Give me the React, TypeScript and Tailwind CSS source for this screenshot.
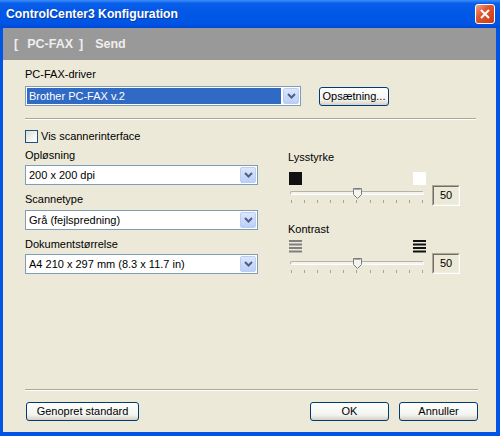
import React from "react";

const F = "font-['Liberation_Sans',Arial,sans-serif]";

function Chevron() {
  return (
    <svg width="9" height="6" viewBox="0 0 9 6">
      <polyline points="1,1 4.5,4.5 8,1" fill="none" stroke="#4D6185" strokeWidth="2" />
    </svg>
  );
}

function DropBtn() {
  return (
    <div className="m-px flex w-[16px] items-center justify-center rounded-[2px] border border-[#B9CDF7] bg-[linear-gradient(to_bottom,#DCE6FB,#BCCFF8)]">
      <Chevron />
    </div>
  );
}

function Combo({ cls, text, selected }: { cls: string; text: string; selected?: boolean }) {
  return (
    <div className={`flex h-[20px] items-stretch border border-[#7F9DB9] bg-white ${cls}`}>
      <div className="flex flex-1 p-px">
        <div className={`flex flex-1 items-center pl-[2px] text-[11px] ${selected ? "bg-[#316AC5] text-white" : "text-black"}`}>
          {text}
        </div>
      </div>
      <DropBtn />
    </div>
  );
}

function XPButton({ cls, children }: { cls: string; children: React.ReactNode }) {
  return (
    <div
      className={`flex h-[19px] items-center justify-center rounded-[3px] border border-[#003C74] bg-[linear-gradient(to_bottom,#FFFFFF,#F3F3EF_70%,#D6D0C5)] text-[11px] text-black ${cls}`}
    >
      {children}
    </div>
  );
}

function Slider() {
  const ticks = Array.from({ length: 11 });
  return (
    <div className="relative w-[136px]">
      <div className="mx-[1px] h-[4px] rounded-[2px] border border-[#B5B3AA] border-b-white border-r-white bg-[#F4F3EE]" />
      <div className="absolute left-[64px] top-[-3px]">
        <svg width="9" height="11" viewBox="0 0 9 11">
          <path d="M0.5 0.5 H8.5 V6.5 L4.5 10.5 L0.5 6.5 Z" fill="#F4F3EE" stroke="#7C7C7C" />
          <line x1="1.5" y1="1.5" x2="7.5" y2="1.5" stroke="#A7A7A7" />
        </svg>
      </div>
      <div className="mt-[5px] flex justify-between px-[2px]">
        {ticks.map((_, i) => (
          <div key={i} className="h-[3px] w-px bg-[#A7A69E]" />
        ))}
      </div>
    </div>
  );
}

function ValueBox() {
  return (
    <div className="flex h-[21px] w-[28px] items-center justify-center border border-[#ACA899] border-b-white border-r-white text-[11px] text-black">
      <div className="flex h-full w-full items-center justify-center border border-[#716F64] border-b-[#F1EFE2] border-r-[#F1EFE2]">
        50
      </div>
    </div>
  );
}

function Lines({ color }: { color: string }) {
  return (
    <svg width="13" height="13" viewBox="0 0 13 13">
      {[0, 1, 2, 3].map((i) => (
        <rect key={i} x="0" y={i * 3.5} width="13" height="2" fill={color} />
      ))}
    </svg>
  );
}

export default function App() {
  return (
    <div className={`flex h-[436px] w-[500px] flex-col bg-[#0055E5] leading-[13px] ${F}`}>
      {/* Title bar */}
      <div className="flex h-[28px] items-center justify-between bg-[linear-gradient(to_bottom,#3C8EF9_0%,#0A5EEA_12%,#0058E6_45%,#0054E3_85%,#0049D6_100%)] pl-[6px] pr-[5px]">
        <span className="text-[12.2px] font-bold text-white [text-shadow:1px_1px_0_#0A3AA0]">
          ControlCenter3 Konfiguration
        </span>
        <div className="flex h-[20px] w-[20px] items-center justify-center rounded-[3px] border border-white bg-[linear-gradient(135deg,#F0A48A,#E0552E_40%,#CB3B16)]">
          <svg width="10" height="10" viewBox="0 0 10 10">
            <path d="M1 1 L9 9 M9 1 L1 9" stroke="white" strokeWidth="2" />
          </svg>
        </div>
      </div>

      {/* Body with blue frame */}
      <div className="flex flex-1 flex-col pb-[4px] pl-[3px] pr-[4px]">
        <div className="flex flex-1 flex-col bg-[#ECE9D8]">
          {/* Gray header */}
          <div className="flex h-[32px] items-center bg-[#999999] pl-[11px] text-[12.5px] font-bold text-[#EEEEEE]">
            <span>[</span>
            <span className="ml-[9px]">PC-FAX</span>
            <span className="ml-[6px]">]</span>
            <span className="ml-[12px]">Send</span>
          </div>

          <div className="flex flex-1 flex-col pl-[22px] pr-[20px]">
            <div className="mt-[8px] text-[11px] text-black">PC-FAX-driver</div>
            <div className="mt-[5px] flex items-center">
              <Combo cls="w-[276px]" text="Brother PC-FAX v.2" selected />
              <XPButton cls="ml-[18px] h-[18px] w-[70px]">Opsætning...</XPButton>
            </div>
            <div className="mt-[12px] h-[2px] border-t border-[#ACA899] border-b border-b-white" />

            <div className="mt-[10px] flex items-center gap-[3px]">
              <div className="h-[13px] w-[13px] border border-[#1C5180] bg-[linear-gradient(135deg,#DCDBD5,#F5F4EF_60%,#FFFFFF)]" />
              <span className="text-[11px] text-black">Vis scannerinterface</span>
            </div>

            <div className="mt-[6px] flex">
              {/* Left column */}
              <div className="flex w-[233px] flex-col">
                <div className="text-[11px] text-black">Opløsning</div>
                <Combo cls="mt-[3px] w-[233px]" text="200 x 200 dpi" />
                <div className="mt-[8px] text-[11px] text-black">Scannetype</div>
                <Combo cls="mt-[4px] w-[233px]" text="Grå (fejlspredning)" />
                <div className="mt-[8px] text-[11px] text-black">Dokumentstørrelse</div>
                <Combo cls="mt-[3px] w-[233px]" text="A4 210 x 297 mm (8.3 x 11.7 in)" />
              </div>

              {/* Right column */}
              <div className="ml-[30px] flex flex-col">
                <div className="mt-[2px] text-[11px] text-black">Lysstyrke</div>
                <div className="mt-[8px] flex">
                  <div className="flex flex-col pl-[1px]">
                    <div className="flex w-[137px] justify-between">
                      <div className="h-[13px] w-[13px] bg-[#111111]" />
                      <div className="h-[13px] w-[13px] bg-white" />
                    </div>
                    <div className="mt-[6px]">
                      <Slider />
                    </div>
                  </div>
                  <div className="ml-[6px] mt-[13px]">
                    <ValueBox />
                  </div>
                </div>

                <div className="mt-[17px] text-[11px] text-black">Kontrast</div>
                <div className="mt-[4px] flex">
                  <div className="flex flex-col pl-[1px]">
                    <div className="flex w-[137px] justify-between">
                      <Lines color="#808080" />
                      <Lines color="#111111" />
                    </div>
                    <div className="mt-[8px]">
                      <Slider />
                    </div>
                  </div>
                  <div className="ml-[6px] mt-[13px]">
                    <ValueBox />
                  </div>
                </div>
              </div>
            </div>

            <div className="flex-1" />
            <div className="mr-[-2px] h-[2px] border-t border-[#ACA899] border-b border-b-white" />
            <div className="mt-[11px] mb-[11px] flex items-center">
              <XPButton cls="ml-[1px] w-[113px]">Genopret standard</XPButton>
              <div className="flex-1" />
              <XPButton cls="w-[79px]">OK</XPButton>
              <XPButton cls="ml-[10px] mr-[-2px] w-[79px]">Annuller</XPButton>
            </div>
          </div>
        </div>
      </div>
    </div>
  );
}
